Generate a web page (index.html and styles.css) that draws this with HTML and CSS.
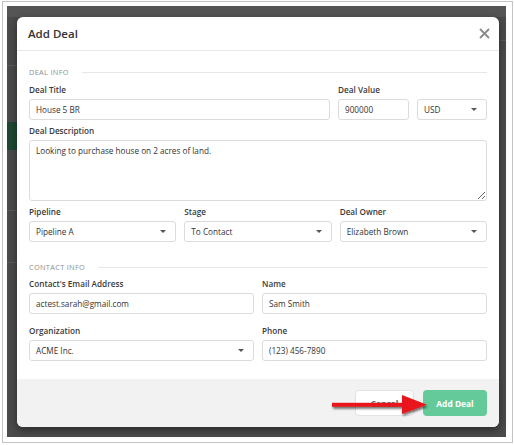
FILE: index.html
```
<!DOCTYPE html>
<html lang="en">
<head>
    <meta charset="UTF-8">
    <title>Add Deal</title>
    <link rel="stylesheet" href="styles.css">
</head>
<body>
    <div class="frame">
        <div class="backdrop">
            <div class="modal">
                <div class="modal-header">
                    <h3>Add Deal</h3>
                    <span class="close">
                        <svg width="11" height="11" viewBox="0 0 11 11">
                            <path d="M1 1 L10 10 M10 1 L1 10" stroke="#8a8a8a" stroke-width="1.8" fill="none"/>
                        </svg>
                    </span>
                </div>

                <div class="modal-body">
                    <div class="section-title deal"><span>DEAL INFO</span></div>

                    <div class="row row-title">
                        <div class="field">
                            <label>Deal Title</label>
                            <div class="control">House 5 BR</div>
                        </div>
                        <div class="field">
                            <label>Deal Value</label>
                            <div class="control">900000</div>
                        </div>
                        <div class="field">
                            <label>&nbsp;</label>
                            <div class="control select">USD</div>
                        </div>
                    </div>

                    <div class="field description">
                        <label>Deal Description</label>
                        <textarea class="control area">Looking to purchase house on 2 acres of land.</textarea>
                    </div>

                    <div class="row row-three">
                        <div class="field">
                            <label>Pipeline</label>
                            <div class="control select">Pipeline A</div>
                        </div>
                        <div class="field">
                            <label>Stage</label>
                            <div class="control select">To Contact</div>
                        </div>
                        <div class="field">
                            <label>Deal Owner</label>
                            <div class="control select">Elizabeth Brown</div>
                        </div>
                    </div>

                    <div class="section-title contact"><span>CONTACT INFO</span></div>

                    <div class="row row-two">
                        <div class="field">
                            <label>Contact's Email Address</label>
                            <div class="control">actest.sarah@gmail.com</div>
                        </div>
                        <div class="field">
                            <label>Name</label>
                            <div class="control">Sam Smith</div>
                        </div>
                    </div>

                    <div class="row row-two second">
                        <div class="field">
                            <label>Organization</label>
                            <div class="control select">ACME Inc.</div>
                        </div>
                        <div class="field">
                            <label>Phone</label>
                            <div class="control">(123) 456-7890</div>
                        </div>
                    </div>
                </div>

                <div class="modal-footer">
                    <button class="btn btn-cancel">Cancel</button>
                    <button class="btn btn-add">Add Deal</button>

                    <!-- annotation arrow pointing at the button -->
                    <svg class="arrow" width="104" height="26" viewBox="0 0 104 26">
                        <defs>
                            <filter id="sh" x="-10%" y="-30%" width="130%" height="180%">
                                <feDropShadow dx="1" dy="2" stdDeviation="1.2" flood-color="#000" flood-opacity="0.55"/>
                            </filter>
                        </defs>
                        <g filter="url(#sh)">
                            <rect x="2" y="9.8" width="74" height="4" fill="#e8191a"/>
                            <polygon points="72,2 97,11.8 72,21" fill="#e8191a"/>
                        </g>
                    </svg>
                </div>
            </div>
        </div>
    </div>
</body>
</html>
```

FILE: styles.css
```
* {
    box-sizing: border-box;
}

body {
    margin: 0;
    background: #fff;
    font-family: "Open Sans", Arial, sans-serif;
}

/* screenshot frame */
.frame {
    width: 511px;
    height: 442px;
    margin: 1px 0 0 2px;
    padding: 4px 6px 5px 4px;
    border: 1px solid #c4c4c4;
    background: #fff;
}

/* dimmed app behind the modal */
.backdrop {
    height: 100%;
    padding: 11px 7px 10px 10px;
    background:
        linear-gradient(#1e4a32, #1e4a32) 0 116px / 10px 28px no-repeat,
        linear-gradient(#5c5c5c, #5c5c5c) 0 59px / 10px 1px no-repeat,
        linear-gradient(#5c5c5c, #5c5c5c) 0 204px / 10px 1px no-repeat,
        linear-gradient(#5c5c5c, #5c5c5c) 0 256px / 10px 1px no-repeat,
        linear-gradient(#5a5a5a, #5a5a5a) 492px 34px / 8px 1px no-repeat,
        linear-gradient(#555, #555) 0 0 / 100% 11px no-repeat,
        #4b4b4b;
}

.modal {
    height: 100%;
    display: flex;
    flex-direction: column;
    background: #fff;
    border-radius: 6px;
    overflow: hidden;
    box-shadow: 0 3px 10px rgba(0, 0, 0, 0.45);
}

.modal-header {
    height: 34px;
    padding: 0 9px 0 11px;
    display: flex;
    align-items: center;
    justify-content: space-between;
    border-bottom: 1px solid #e8e8e8;
}

.modal-header h3 {
    margin: 0;
    font-size: 11.5px;
    font-weight: 600;
    color: #333;
}

.close {
    display: flex;
    margin-top: -1px;
}

.modal-body {
    flex: 1;
    padding: 16px 12px 0 12px;
}

/* section heading with a rule after it */
.section-title {
    display: flex;
    align-items: center;
    height: 10px;
    font-size: 7.4px;
    letter-spacing: 0.3px;
    color: #8f8f8f;
}

.section-title::after {
    content: "";
    flex: 1;
    height: 1px;
    margin-left: 13px;
    background: #e6e6e6;
}

.section-title.deal {
    margin-bottom: 7px;
}

.section-title.contact {
    margin-top: 20px;
    margin-bottom: 6px;
}

.row {
    display: grid;
    column-gap: 8px;
}

.row-title {
    grid-template-columns: 1fr 71px 70px;
}

.row-three {
    grid-template-columns: 1fr 1fr 1fr;
}

.row-two {
    grid-template-columns: 1fr 1fr;
}

.row-two.second {
    margin-top: 11px;
}

.field label {
    display: block;
    height: 12px;
    line-height: 12px;
    margin-bottom: 3px;
    font-size: 8.2px;
    font-weight: 600;
    color: #3a3a3a;
}

.description {
    margin-top: 5px;
    margin-bottom: 5px;
}

.control {
    position: relative;
    height: 21px;
    line-height: 19px;
    padding: 0 6px;
    border: 1px solid #dcdcdc;
    border-radius: 3px;
    font-size: 8.2px;
    color: #333;
    background: #fff;
}

.control.area {
    display: block;
    width: 100%;
    height: 61px;
    padding: 4px 6px;
    line-height: 12px;
    font-family: inherit;
    resize: vertical;
    outline: none;
}

/* dropdown caret */
.select::after {
    content: "";
    position: absolute;
    right: 9px;
    top: 8px;
    border-left: 3px solid transparent;
    border-right: 3px solid transparent;
    border-top: 3.5px solid #555;
}

.modal-footer {
    position: relative;
    height: 48px;
    padding: 0 12px;
    display: flex;
    align-items: center;
    justify-content: flex-end;
    gap: 9px;
    background: #f2f2f2;
}

.btn {
    height: 26px;
    border-radius: 4px;
    font-family: inherit;
    font-size: 8.4px;
    font-weight: 700;
}

.btn-cancel {
    width: 59px;
    border: 1px solid #e2e2e2;
    background: #fff;
    color: #666;
}

.btn-add {
    width: 64px;
    border: none;
    background: #64ca9a;
    color: #fff;
}

.arrow {
    position: absolute;
    left: 313px;
    top: 14px;
}
```
